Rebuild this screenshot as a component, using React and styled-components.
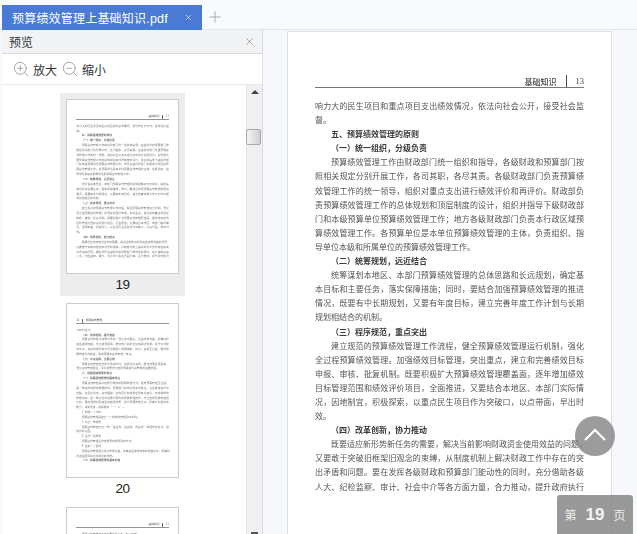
import React from "react";
import styled, { createGlobalStyle } from "styled-components";
import { ZoomIn, ZoomOut, X, Plus } from "lucide-react";

const GlobalStyle = createGlobalStyle`
  html, body {
    margin: 0;
    padding: 0;
    background: #f6f8fb;
    font-family: "Noto Sans CJK SC", "Noto Sans", sans-serif;
  }
`;

const Shell = styled.div`
  position: relative;
  width: 637px;
  height: 534px;
  overflow: hidden;
  display: flex;
  flex-direction: column;
`;

const TabBar = styled.div`
  height: 30px;
  box-sizing: border-box;
  padding: 5px 0 0 2px;
  display: flex;
  align-items: stretch;
  background: #f8fafc;
  border-bottom: 1px solid #e2e5e9;
`;

const Tab = styled.div`
  width: 200px;
  margin-bottom: -1px;
  box-sizing: border-box;
  padding: 0 9px 0 10px;
  display: flex;
  align-items: center;
  justify-content: space-between;
  background: #4a7bd4;
  color: #fff;
  font-size: 12px;
  letter-spacing: 0.2px;
`;

const PdfExt = styled.span`
  font-family: "Liberation Sans", sans-serif;
  font-size: 12.5px;
`;

const AddTab = styled.div`
  width: 26px;
  display: flex;
  align-items: center;
  justify-content: center;
  color: #8f959c;
`;

const Content = styled.div`
  flex: 1;
  min-height: 0;
  display: flex;
`;

const Panel = styled.div`
  width: 260px;
  margin-left: 2px;
  border-right: 1px solid #d9dbde;
  display: flex;
  flex-direction: column;
  background: #fff;
`;

const PanelHead = styled.div`
  height: 23px;
  flex: none;
  padding: 0 7px 0 7px;
  display: flex;
  align-items: center;
  justify-content: space-between;
  background: #f2f3f5;
  border-bottom: 1px solid #d9dbde;
  font-size: 12px;
  color: #333;
`;

const ZoomBar = styled.div`
  height: 30px;
  flex: none;
  padding-left: 10px;
  display: flex;
  align-items: center;
  border-bottom: 1px solid #e8e9eb;
  font-size: 12px;
  color: #333;
`;

const ZoomLabel = styled.span`
  margin: 0 4px 0 3px;
`;

const ThumbArea = styled.div`
  flex: 1;
  min-height: 0;
  display: flex;
`;

const ThumbList = styled.div`
  flex: 1;
  overflow: hidden;
  padding: 8px 0 0 58px;
`;

const ThumbItem = styled.div`
  width: 125px;
  height: 203px;
  margin-bottom: 1px;
  box-sizing: border-box;
  padding-top: 6px;
  display: flex;
  flex-direction: column;
  align-items: center;
  background: ${(p) => (p.$active ? "#ededed" : "transparent")};
`;

const ThumbFrame = styled.div`
  width: 113px;
  height: 175px;
  flex: none;
  box-sizing: border-box;
  overflow: hidden;
  border: 1px solid #cdcdcd;
  background: #fff;
`;

const ThumbScale = styled.div`
  zoom: 0.344;
  opacity: 0.78;
  filter: blur(0.8px);
`;

const ThumbNumber = styled.div`
  margin-top: 2px;
  font-family: "Liberation Sans", sans-serif;
  font-size: 13.5px;
  letter-spacing: -0.5px;
  line-height: 18px;
  color: #222;
`;

const ScrollTrack = styled.div`
  width: 16px;
  flex: none;
  box-sizing: border-box;
  display: flex;
  flex-direction: column;
  align-items: center;
  justify-content: space-between;
  padding: 5px 0 0;
  background: #f0f0f0;
  border-left: 1px solid #e4e4e4;
  position: relative;
`;

const ScrollThumb = styled.div`
  position: absolute;
  top: 44px;
  left: -1px;
  width: 13px;
  height: 14px;
  border: 1px solid #a9a9a9;
  border-radius: 2px;
  background: linear-gradient(90deg, #f5f5f5, #cfcfcf);
`;

const ArrowUp = styled.div`
  width: 0;
  height: 0;
  border-left: 4px solid transparent;
  border-right: 4px solid transparent;
  border-bottom: 4px solid #444;
`;

const ArrowDown = styled.div`
  width: 7px;
  height: 2px;
  background: #555;
`;

const Viewer = styled.div`
  flex: 1;
  min-width: 0;
  overflow: hidden;
  padding: 1px 0 0 24px;
`;

const ViewPage = styled.div`
  width: 323px;
  height: 520px;
  border: 1px solid #dcdfe4;
  background: #fff;
`;

const Sheet = styled.div`
  box-sizing: border-box;
  width: 323px;
  padding: 42px 27px 0 27px;
  background: #fff;
  filter: blur(0.55px);
  color: #555;
  font-size: 8px;
  line-height: 14.1px;
`;

const RunHead = styled.div`
  height: 13px;
  margin-bottom: 11px;
  display: flex;
  align-items: flex-end;
  justify-content: ${(p) => (p.$even ? "flex-start" : "flex-end")};
  border-bottom: 1.5px solid #777;
  line-height: 11px;
  color: #444;
`;

const RunTitle = styled.span`
  font-weight: 500;
`;

const RunBar = styled.span`
  width: 1px;
  height: 12px;
  margin: 0 9px;
  background: #444;
`;

const RunNumber = styled.span`
  font-family: "Liberation Serif", serif;
  font-size: 8.5px;
`;

const Line = styled.div`
  height: 14.1px;
  white-space: nowrap;
  padding-left: ${(p) => (p.$indent ? "16px" : "0")};
  text-align: justify;
  text-align-last: ${(p) => (p.$fill ? "justify" : "left")};
  font-weight: ${(p) => (p.$bold ? 700 : 400)};
  color: ${(p) => (p.$bold ? "#3a3a3a" : "#555")};
`;

const BackTop = styled.div`
  position: absolute;
  left: 575px;
  top: 416px;
  width: 40px;
  height: 40px;
  border-radius: 50%;
  background: rgba(128, 128, 128, 0.78);
  display: flex;
  align-items: center;
  justify-content: center;
`;

const PageBadge = styled.div`
  position: absolute;
  left: 557px;
  top: 495px;
  width: 76px;
  height: 39px;
  border-radius: 3px 3px 0 0;
  background: rgba(128, 128, 128, 0.8);
  display: flex;
  align-items: center;
  justify-content: center;
  color: #eee;
  font-size: 12px;
`;

const BadgeNumber = styled.span`
  margin: 0 9px;
  font-family: "Liberation Sans", sans-serif;
  font-size: 17px;
  font-weight: 700;
  color: #f4f4f4;
`;

// f = full justified line, i = indented, b = bold heading
const page19 = [
  ["响力大的民生项目和重点项目支出绩效情况，依法向社会公开，接受社会监", "f"],
  ["督。", ""],
  ["五、预算绩效管理的原则", "ib"],
  ["（一）统一组织，分级负责", "ib"],
  ["预算绩效管理工作由财政部门统一组织和指导，各级财政和预算部门按", "fi"],
  ["照相关规定分别开展工作，各司其职，各尽其责。各级财政部门负责预算绩", "f"],
  ["效管理工作的统一领导，组织对重点支出进行绩效评价和再评价。财政部负", "f"],
  ["责预算绩效管理工作的总体规划和顶层制度的设计，组织并指导下级财政部", "f"],
  ["门和本级预算单位预算绩效管理工作；地方各级财政部门负责本行政区域预", "f"],
  ["算绩效管理工作。各预算单位是本单位预算绩效管理的主体，负责组织、指", "f"],
  ["导单位本级和所属单位的预算绩效管理工作。", ""],
  ["（二）统筹规划，远近结合", "ib"],
  ["统筹谋划本地区、本部门预算绩效管理的总体思路和长远规划，确定基", "fi"],
  ["本目标和主要任务，落实保障措施；同时，要结合加强预算绩效管理的推进", "f"],
  ["情况，既要有中长期规划，又要有年度目标，建立完善年度工作计划与长期", "f"],
  ["规划相结合的机制。", ""],
  ["（三）程序规范，重点突出", "ib"],
  ["建立规范的预算绩效管理工作流程，健全预算绩效管理运行机制，强化", "fi"],
  ["全过程预算绩效管理。加强绩效目标管理，突出重点，建立和完善绩效目标", "f"],
  ["申报、审核、批复机制。既要积极扩大预算绩效管理覆盖面，逐年增加绩效", "f"],
  ["目标管理范围和绩效评价项目，全面推进，又要结合本地区、本部门实际情", "f"],
  ["况，因地制宜，积极探索，以重点民生项目作为突破口，以点带面，早出时", "f"],
  ["效。", ""],
  ["（四）改革创新，协力推动", "ib"],
  ["既要适应新形势新任务的需要，解决当前影响财政资金使用效益的问题，", "fi"],
  ["又要敢于突破旧框架旧观念的束缚，从制度机制上解决财政工作中存在的突", "f"],
  ["出矛盾和问题。要在发挥各级财政和预算部门能动性的同时，充分借助各级", "f"],
  ["人大、纪检监察、审计、社会中介等各方面力量，合力推动，提升政府执行", "f"],
];

const page20 = [
  ["力和公信力。", ""],
  ["（五）讲求绩效，提升效益", "ib"],
  ["预算绩效管理以结果为导向，强化支出责任，注重成本效益，提高财政", "fi"],
  ["资金使用效益，优化资源配置，推动部门和单位切实履行职责，提升公共服", "f"],
  ["务水平，将绩效理念和方法深度融入预算编制、执行、监督全过程，推动预", "f"],
  ["算管理方式转变，实现预算和绩效管理一体化。", ""],
  ["（六）公开透明，注重运用", "ib"],
  ["预算绩效管理信息依法依规公开，接受社会监督，推动结果应用落实，", "fi"],
  ["强化绩效管理责任，评价结果作为安排预算和改进管理的重要依据。", ""],
  ["六、预算绩效管理的特点", "ib"],
  ["（一）预算绩效管理的基本特点", "ib"],
  ["预算绩效管理是以结果为导向的预算管理方式，贯穿预算管理全过程，", "fi"],
  ["是一种追求结果的管理模式，强调部门和单位的支出责任，注重成本和产出", "f"],
  ["效益，将目标设定、绩效跟踪、绩效评价和结果应用有机结合，形成完整的", "f"],
  ["管理链条，是一种以支出结果为导向的预算管理模式，与过去的预算管理相", "f"],
  ["比较，更加强调财政资金的使用效果，提升预算管理水平，提高公共服务的", "f"],
  ["能力，具体而言，就是做到“一、二”。", ""],
  ["1. 构建一个闭环", "i"],
  ["预算绩效管理是建立一个完整的管理闭环系统。", "i"],
  ["2. 树立一种理念", "i"],
  ["预算绩效管理树立一种“讲绩效、重绩效、用绩效”的理念和文化，形", "fi"],
  ["成良好氛围。", ""],
  ["3. 坚持一项原则", "i"],
  ["预算绩效管理坚持结果导向的原则和方法。", "i"],
  ["4. 达到一个目的", "i"],
  ["预算绩效管理通过规范管理流程，提高资金使用效率和效益水平，提高财", "fi"],
  ["政资金配置和公共服务的效果。", ""],
  ["（二）预算绩效管理的基本内容", "ib"],
];

const page21 = [
  ["预算绩效管理的内容主要包括以下“五个环节”。", "i"],
  ["绩效目标管理是全过程预算绩效管理的起点和基础。", "i"],
];

function PageLines({ lines }) {
  return lines.map(([text, flags], i) => (
    <Line
      key={i}
      $fill={flags.includes("f")}
      $indent={flags.includes("i")}
      $bold={flags.includes("b")}
    >
      {text}
    </Line>
  ));
}

function BookPage({ lines, title, number, even }) {
  return (
    <Sheet>
      <RunHead $even={even}>
        {even ? (
          <>
            <RunNumber>{number}</RunNumber>
            <RunBar />
            <RunTitle>{title}</RunTitle>
          </>
        ) : (
          <>
            <RunTitle>{title}</RunTitle>
            <RunBar />
            <RunNumber>{number}</RunNumber>
          </>
        )}
      </RunHead>
      <PageLines lines={lines} />
    </Sheet>
  );
}

function Thumb({ label, active, children }) {
  return (
    <ThumbItem $active={active}>
      <ThumbFrame>
        <ThumbScale>{children}</ThumbScale>
      </ThumbFrame>
      <ThumbNumber>{label}</ThumbNumber>
    </ThumbItem>
  );
}

export default function App() {
  return (
    <Shell>
      <GlobalStyle />
      <TabBar>
        <Tab>
          <span>
            预算绩效管理上基础知识<PdfExt>.pdf</PdfExt>
          </span>
          <X size={9} strokeWidth={1.5} />
        </Tab>
        <AddTab>
          <Plus size={18} strokeWidth={1} />
        </AddTab>
      </TabBar>
      <Content>
        <Panel>
          <PanelHead>
            预览
            <X size={11} strokeWidth={1.2} color="#666" />
          </PanelHead>
          <ZoomBar>
            <ZoomIn size={18} strokeWidth={1} color="#868c94" />
            <ZoomLabel>放大</ZoomLabel>
            <ZoomOut size={18} strokeWidth={1} color="#868c94" />
            <ZoomLabel>缩小</ZoomLabel>
          </ZoomBar>
          <ThumbArea>
            <ThumbList>
              <Thumb label="19" active>
                <BookPage lines={page19} title="基础知识" number="13" />
              </Thumb>
              <Thumb label="20">
                <BookPage lines={page20} title="预算绩效管理" number="14" even />
              </Thumb>
              <Thumb label="21">
                <BookPage lines={page21} title="基础知识" number="15" />
              </Thumb>
            </ThumbList>
            <ScrollTrack>
              <ArrowUp />
              <ScrollThumb />
              <ArrowDown />
            </ScrollTrack>
          </ThumbArea>
        </Panel>
        <Viewer>
          <ViewPage>
            <BookPage lines={page19} title="基础知识" number="13" />
          </ViewPage>
        </Viewer>
      </Content>
      <BackTop>
        <svg width="40" height="40" viewBox="0 0 40 40" fill="none">
          <polyline points="10,24 20,14 30,24" stroke="#fff" strokeWidth="2.2" />
        </svg>
      </BackTop>
      <PageBadge>
        第<BadgeNumber>19</BadgeNumber>页
      </PageBadge>
    </Shell>
  );
}
